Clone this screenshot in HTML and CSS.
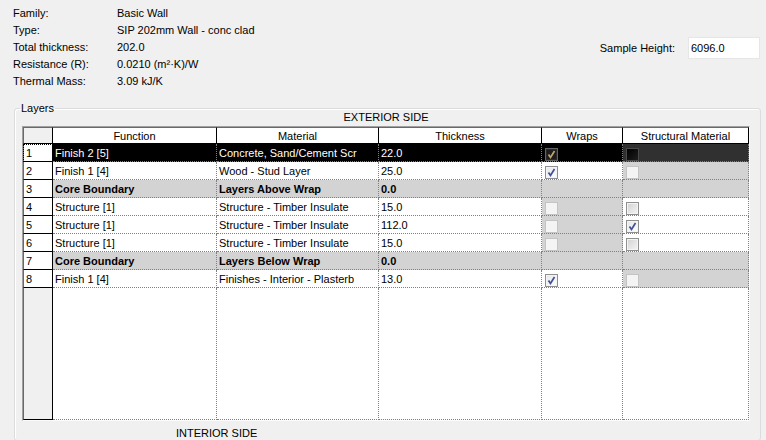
FILE: index.html
```html
<!DOCTYPE html>
<html lang="en">
<head>
    <meta charset="UTF-8">
    <title>Edit Assembly</title>
    <link rel="stylesheet" href="styles.css">
</head>
<body>
    <div class="top">
        <div class="info">
            <span>Family:</span><span>Basic Wall</span>
            <span>Type:</span><span>SIP 202mm Wall - conc clad</span>
            <span>Total thickness:</span><span>202.0</span>
            <span>Resistance (R):</span><span>0.0210 (m²·K)/W</span>
            <span>Thermal Mass:</span><span>3.09 kJ/K</span>
        </div>
        <div class="sample">
            <label for="sample-height">Sample Height:</label>
            <input id="sample-height" class="sample-input" type="text" value="6096.0" readonly>
        </div>
    </div>

    <fieldset class="layers-box">
        <legend>Layers</legend>
        <div class="side">EXTERIOR SIDE</div>
        <div class="grid-frame">
            <table class="layers">
                <thead>
                    <tr>
                        <th class="w-num"></th>
                        <th class="w-func">Function</th>
                        <th class="w-mat">Material</th>
                        <th class="w-thk">Thickness</th>
                        <th class="w-wrap">Wraps</th>
                        <th class="w-struct">Structural Material</th>
                    </tr>
                </thead>
                <tbody>
                    <tr class="sel">
                        <td class="num focus">1</td>
                        <td>Finish 2 [5]</td>
                        <td>Concrete, Sand/Cement Scr</td>
                        <td>22.0</td>
                        <td class="box"><span class="cb cb-dark on"><svg viewBox="0 0 11 11"><path d="M2.5 5.5 L4.5 8.5 L8.5 2"/></svg></span></td>
                        <td class="box dim"><span class="cb cb-black"></span></td>
                    </tr>
                    <tr>
                        <td class="num">2</td>
                        <td>Finish 1 [4]</td>
                        <td>Wood - Stud Layer</td>
                        <td>25.0</td>
                        <td class="box"><span class="cb on"><svg viewBox="0 0 11 11"><path d="M2.5 5.5 L4.5 8.5 L8.5 2"/></svg></span></td>
                        <td class="box off"><span class="cb cb-off"></span></td>
                    </tr>
                    <tr class="core">
                        <td class="num">3</td>
                        <td class="off">Core Boundary</td>
                        <td class="off">Layers Above Wrap</td>
                        <td class="off">0.0</td>
                        <td class="off"></td>
                        <td class="off"></td>
                    </tr>
                    <tr>
                        <td class="num">4</td>
                        <td>Structure [1]</td>
                        <td>Structure - Timber Insulate</td>
                        <td>15.0</td>
                        <td class="box off"><span class="cb cb-off"></span></td>
                        <td class="box"><span class="cb"></span></td>
                    </tr>
                    <tr>
                        <td class="num">5</td>
                        <td>Structure [1]</td>
                        <td>Structure - Timber Insulate</td>
                        <td>112.0</td>
                        <td class="box off"><span class="cb cb-off"></span></td>
                        <td class="box"><span class="cb on"><svg viewBox="0 0 11 11"><path d="M2.5 5.5 L4.5 8.5 L8.5 2"/></svg></span></td>
                    </tr>
                    <tr>
                        <td class="num">6</td>
                        <td>Structure [1]</td>
                        <td>Structure - Timber Insulate</td>
                        <td>15.0</td>
                        <td class="box off"><span class="cb cb-off"></span></td>
                        <td class="box"><span class="cb"></span></td>
                    </tr>
                    <tr class="core">
                        <td class="num">7</td>
                        <td class="off">Core Boundary</td>
                        <td class="off">Layers Below Wrap</td>
                        <td class="off">0.0</td>
                        <td class="off"></td>
                        <td class="off"></td>
                    </tr>
                    <tr>
                        <td class="num">8</td>
                        <td>Finish 1 [4]</td>
                        <td>Finishes - Interior - Plasterb</td>
                        <td>13.0</td>
                        <td class="box"><span class="cb on"><svg viewBox="0 0 11 11"><path d="M2.5 5.5 L4.5 8.5 L8.5 2"/></svg></span></td>
                        <td class="box off"><span class="cb cb-off"></span></td>
                    </tr>
                    <tr class="filler">
                        <td class="num"></td>
                        <td></td>
                        <td></td>
                        <td></td>
                        <td></td>
                        <td></td>
                    </tr>
                </tbody>
            </table>
        </div>
        <div class="side side-bottom">INTERIOR SIDE</div>
    </fieldset>
</body>
</html>
```

FILE: styles.css
```css
* {
    margin: 0;
    padding: 0;
    box-sizing: border-box;
}

body {
    font-family: "Liberation Sans", Arial, sans-serif;
    font-size: 11px;
    color: #000;
    background-color: #f0f0f0;
    width: 766px;
    height: 440px;
    overflow: hidden;
}

.top {
    display: flex;
    justify-content: space-between;
    align-items: flex-start;
    padding: 5px 6px 0 13px;
}

.info {
    display: grid;
    grid-template-columns: 104px auto;
    line-height: 17px;
}

.sample {
    display: flex;
    align-items: center;
    margin-top: 32px;
}

.sample label {
    margin-right: 13px;
}

.sample-input {
    width: 72px;
    height: 22px;
    padding: 0 2px;
    font-family: inherit;
    font-size: 11px;
    color: #000;
    background: #fff;
    border: 1px solid #e6e6e6;
    outline: none;
}

/* Layers group */

.layers-box {
    margin: 12px 5px 0 14px;
    padding: 0 7px;
    border: 1px solid #dcdcdc;
    border-radius: 3px;
    box-shadow: inset 1px 1px 0 #fff;
}

.layers-box legend {
    margin-left: -2px;
    padding: 0 1px;
    line-height: 12px;
}

.side {
    text-align: center;
    line-height: 13px;
    margin-top: -3px;
    width: 728px;
}

.side-bottom {
    margin-top: 6px;
    width: auto;
    text-align: left;
    padding-left: 154px;
}

.grid-frame {
    width: 728px;
    margin-top: 2px;
    border-top: 1px solid #a0a0a0;
    border-left: 1px solid #a0a0a0;
    border-right: 1px solid #fbfbfb;
    border-bottom: 1px solid #fbfbfb;
}

.layers {
    width: 726px;
    table-layout: fixed;
    border-collapse: separate;
    border-spacing: 0;
}

.layers th {
    height: 17px;
    padding: 0;
    font-weight: normal;
    text-align: center;
    background: #fff;
    border-top: 1px solid #696969;
    border-right: 1px solid #000;
    border-bottom: 1px solid #000;
}

.layers th.w-num {
    background: #f0f0f0;
    border-left: 1px solid #696969;
}

.w-num { width: 30px; }
.w-func { width: 164px; }
.w-mat { width: 162px; }
.w-thk { width: 163px; }
.w-wrap { width: 81px; }
.w-struct { width: 126px; }

.layers td {
    height: 18px;
    padding: 0 0 0 2px;
    white-space: nowrap;
    overflow: hidden;
    background: #fff;
    border-right: 1px dotted #808080;
    border-bottom: 1px dotted #808080;
    line-height: 16px;
}

.layers td.num {
    border-left: 1px solid #696969;
    border-right: 1px solid #000;
    border-bottom: 1px solid #000;
}

.layers td.focus {
    outline: 1px dotted #000;
    outline-offset: -1px;
}

.layers .sel td {
    background: #000;
    color: #fff;
}

.layers .sel td.num {
    background: #fff;
    color: #000;
}

.layers .sel td.dim {
    background: #303030;
}

.layers td.off {
    background: #d3d3d3;
}

.core td {
    font-weight: bold;
}

.core td.num {
    font-weight: normal;
}

.layers td.box {
    vertical-align: top;
}

.layers .filler td {
    height: 132px;
}

.layers .filler td.num {
    background: #f0f0f0;
}

/* checkboxes */

.cb {
    display: block;
    width: 13px;
    height: 13px;
    margin: 4px 0 0 1px;
    border: 1px solid #8f8f8f;
    background: linear-gradient(135deg, #d2d2d2 0%, #f4f4f4 100%);
    box-shadow: inset 0 0 0 1px #f4f4f4;
}

.cb.on {
    background: linear-gradient(135deg, #e6e6e6 0%, #ffffff 100%);
}

.cb svg {
    display: block;
    width: 11px;
    height: 11px;
}

.cb svg path {
    fill: none;
    stroke: #3d4f9c;
    stroke-width: 1.7;
}

.cb-off {
    border-color: #c4c4c4;
    background: #f4f4f4;
    box-shadow: none;
}

.cb-dark {
    border-color: #646464;
    background: #1c1c1c;
    box-shadow: inset 0 0 0 1px #2a2a2a;
}

.cb-dark.on {
    background: #1c1c1c;
}

.cb-dark svg path {
    stroke: #c2a56a;
}

.cb-black {
    border-color: #4a4a4a;
    background: linear-gradient(135deg, #000 0%, #1e1e1e 100%);
    box-shadow: none;
}
```
